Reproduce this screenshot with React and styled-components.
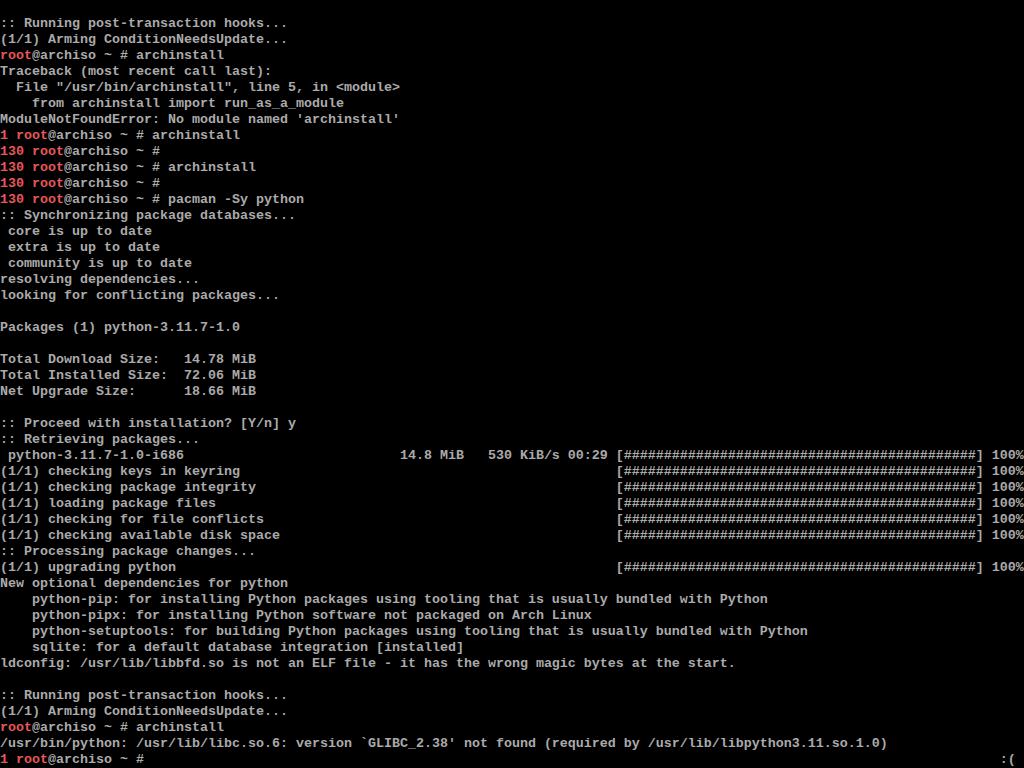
import React from 'react'
import styled, { createGlobalStyle } from 'styled-components'

const Global = createGlobalStyle`
  html, body {
    margin: 0;
    padding: 0;
    background: #000;
  }
`

const Screen = styled.div`
  width: 1024px;
  height: 768px;
  background: #000;
  padding-top: 16px;
  box-sizing: border-box;
  overflow: hidden;
  display: flex;
  flex-direction: column;
`

const Line = styled.div`
  height: 16px;
  line-height: 16px;
  white-space: pre;
  font-family: "Liberation Mono", "DejaVu Sans Mono", monospace;
  font-size: 13.333px;
  font-weight: 700;
  color: #aaaaaa;
`

const Red = styled.span`
  color: #e8555d;
`

const BAR = '[' + '#'.repeat(44) + '] 100%'

const Prompt = ({ code, cmd = '' }) => (
  <Line>
    {code && <Red>{code} </Red>}
    <Red>root</Red>@archiso ~ # {cmd}
  </Line>
)

const Progress = ({ label }) => <Line>{label.padEnd(77, ' ') + BAR}</Line>

const top = [
  ':: Running post-transaction hooks...',
  '(1/1) Arming ConditionNeedsUpdate...',
]

export default function App() {
  return (
    <>
      <Global />
      <Screen>
        {top.map((t) => <Line key={t}>{t}</Line>)}
        <Prompt cmd="archinstall" />
        <Line>Traceback (most recent call last):</Line>
        <Line>{'  File "/usr/bin/archinstall", line 5, in <module>'}</Line>
        <Line>{'    from archinstall import run_as_a_module'}</Line>
        <Line>ModuleNotFoundError: No module named 'archinstall'</Line>
        <Prompt code="1" cmd="archinstall" />
        <Prompt code="130" />
        <Prompt code="130" cmd="archinstall" />
        <Prompt code="130" />
        <Prompt code="130" cmd="pacman -Sy python" />
        <Line>:: Synchronizing package databases...</Line>
        <Line>{' core is up to date'}</Line>
        <Line>{' extra is up to date'}</Line>
        <Line>{' community is up to date'}</Line>
        <Line>resolving dependencies...</Line>
        <Line>looking for conflicting packages...</Line>
        <Line />
        <Line>Packages (1) python-3.11.7-1.0</Line>
        <Line />
        <Line>{'Total Download Size:   14.78 MiB'}</Line>
        <Line>{'Total Installed Size:  72.06 MiB'}</Line>
        <Line>{'Net Upgrade Size:      18.66 MiB'}</Line>
        <Line />
        <Line>:: Proceed with installation? [Y/n] y</Line>
        <Line>:: Retrieving packages...</Line>
        <Progress label={' python-3.11.7-1.0-i686'.padEnd(50, ' ') + '14.8 MiB   530 KiB/s 00:29'} />
        <Progress label="(1/1) checking keys in keyring" />
        <Progress label="(1/1) checking package integrity" />
        <Progress label="(1/1) loading package files" />
        <Progress label="(1/1) checking for file conflicts" />
        <Progress label="(1/1) checking available disk space" />
        <Line>:: Processing package changes...</Line>
        <Progress label="(1/1) upgrading python" />
        <Line>New optional dependencies for python</Line>
        <Line>{'    python-pip: for installing Python packages using tooling that is usually bundled with Python'}</Line>
        <Line>{'    python-pipx: for installing Python software not packaged on Arch Linux'}</Line>
        <Line>{'    python-setuptools: for building Python packages using tooling that is usually bundled with Python'}</Line>
        <Line>{'    sqlite: for a default database integration [installed]'}</Line>
        <Line>ldconfig: /usr/lib/libbfd.so is not an ELF file - it has the wrong magic bytes at the start.</Line>
        <Line />
        {top.map((t) => <Line key={'b' + t}>{t}</Line>)}
        <Prompt cmd="archinstall" />
        <Line>{"/usr/bin/python: /usr/lib/libc.so.6: version `GLIBC_2.38' not found (required by /usr/lib/libpython3.11.so.1.0)"}</Line>
        <Line>
          <Red>1 root</Red>@archiso ~ #{' '.repeat(107)}:(
        </Line>
      </Screen>
    </>
  )
}
